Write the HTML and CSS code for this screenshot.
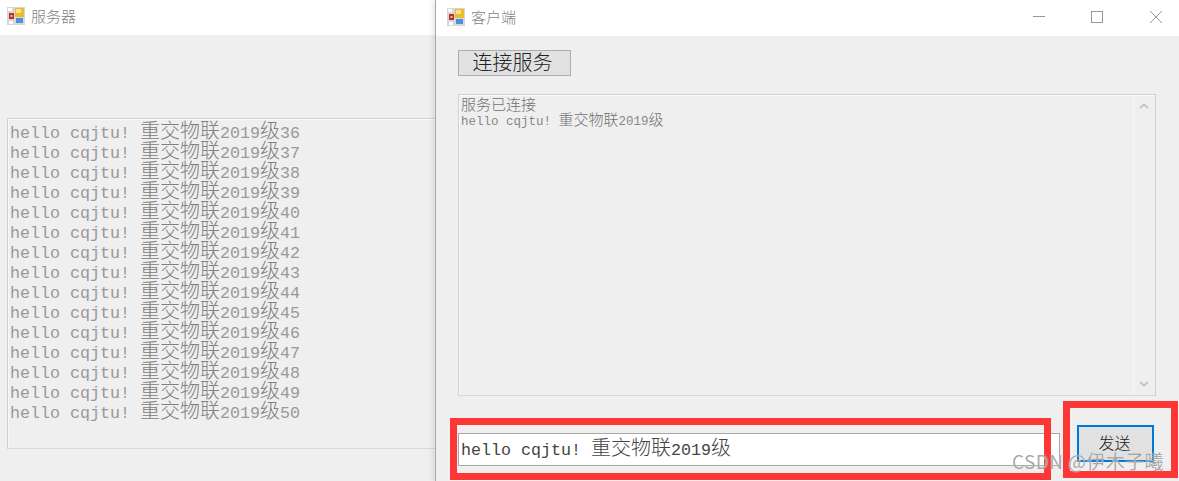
FILE: index.html
```html
<!DOCTYPE html>
<html>
<head>
    <title>客户端</title>
    <link rel="stylesheet" href="styles.css">
</head>
<body>
    <div class="window server">
        <div class="titlebar">
            <svg class="app-icon" viewBox="0 0 18 18"><rect width="18" height="18" fill="#d8d8d8"/><rect x="1" y="1" width="4" height="3" fill="#fff"/><rect x="2" y="6" width="5" height="6" fill="#b5322a"/><rect x="3.5" y="8" width="2" height="2" fill="#f2b8a8"/><rect x="8" y="1" width="9" height="9" fill="#efbb2c"/><rect x="9" y="2" width="5" height="4" fill="#f9e58c"/><rect x="9" y="11" width="7" height="5" fill="#4f8fe0"/><rect x="2" y="14" width="4" height="3" fill="#fff"/></svg>
            <span class="title">服务器</span>
        </div>
        <div class="server-body">
            <div class="log-box server-log">
                <div class="log-line">hello cqjtu! <span class="cjk">重交物联</span>2019<span class="cjk">级</span>36</div>
                <div class="log-line">hello cqjtu! <span class="cjk">重交物联</span>2019<span class="cjk">级</span>37</div>
                <div class="log-line">hello cqjtu! <span class="cjk">重交物联</span>2019<span class="cjk">级</span>38</div>
                <div class="log-line">hello cqjtu! <span class="cjk">重交物联</span>2019<span class="cjk">级</span>39</div>
                <div class="log-line">hello cqjtu! <span class="cjk">重交物联</span>2019<span class="cjk">级</span>40</div>
                <div class="log-line">hello cqjtu! <span class="cjk">重交物联</span>2019<span class="cjk">级</span>41</div>
                <div class="log-line">hello cqjtu! <span class="cjk">重交物联</span>2019<span class="cjk">级</span>42</div>
                <div class="log-line">hello cqjtu! <span class="cjk">重交物联</span>2019<span class="cjk">级</span>43</div>
                <div class="log-line">hello cqjtu! <span class="cjk">重交物联</span>2019<span class="cjk">级</span>44</div>
                <div class="log-line">hello cqjtu! <span class="cjk">重交物联</span>2019<span class="cjk">级</span>45</div>
                <div class="log-line">hello cqjtu! <span class="cjk">重交物联</span>2019<span class="cjk">级</span>46</div>
                <div class="log-line">hello cqjtu! <span class="cjk">重交物联</span>2019<span class="cjk">级</span>47</div>
                <div class="log-line">hello cqjtu! <span class="cjk">重交物联</span>2019<span class="cjk">级</span>48</div>
                <div class="log-line">hello cqjtu! <span class="cjk">重交物联</span>2019<span class="cjk">级</span>49</div>
                <div class="log-line">hello cqjtu! <span class="cjk">重交物联</span>2019<span class="cjk">级</span>50</div>
            </div>
        </div>
    </div>

    <div class="window client">
        <div class="titlebar">
            <svg class="app-icon" viewBox="0 0 18 18"><rect width="18" height="18" fill="#d8d8d8"/><rect x="1" y="1" width="4" height="3" fill="#fff"/><rect x="2" y="6" width="5" height="6" fill="#b5322a"/><rect x="3.5" y="8" width="2" height="2" fill="#f2b8a8"/><rect x="8" y="1" width="9" height="9" fill="#efbb2c"/><rect x="9" y="2" width="5" height="4" fill="#f9e58c"/><rect x="9" y="11" width="7" height="5" fill="#4f8fe0"/><rect x="2" y="14" width="4" height="3" fill="#fff"/></svg>
            <span class="title">客户端</span>
            <div class="win-controls">
                <svg viewBox="0 0 12 12"><path d="M0 5.5H12" stroke="#999" fill="none"/></svg>
                <svg class="win-max" viewBox="0 0 12 12"><rect x="0.5" y="0.5" width="11" height="11" stroke="#999" fill="none"/></svg>
                <svg viewBox="0 0 12 12"><path d="M0 0L12 12M12 0L0 12" stroke="#999" fill="none"/></svg>
            </div>
        </div>
        <div class="client-body">
            <button class="connect-btn">连接服务</button>
            <div class="log-box client-log">
                <div class="log-text">
                    <div class="log-status">服务已连接</div>
                    <div class="log-msg">hello cqjtu! <span class="cjk-small">重交物联</span>2019<span class="cjk-small">级</span></div>
                </div>
                <div class="scrollbar">
                    <svg viewBox="0 0 10 6"><path d="M1 5L5 1.5L9 5" stroke="#c4c4c4" stroke-width="2" fill="none"/></svg>
                    <svg viewBox="0 0 10 6"><path d="M1 1L5 4.5L9 1" stroke="#c4c4c4" stroke-width="2" fill="none"/></svg>
                </div>
            </div>
            <div class="send-row">
                <div class="msg-input">hello cqjtu! <span class="cjk">重交物联</span>2019<span class="cjk">级</span></div>
                <button class="send-btn">发送</button>
            </div>
        </div>
    </div>

    <div class="highlight highlight-input"></div>
    <div class="highlight highlight-send"></div>
    <div class="watermark">CSDN @伊木子曦</div>
</body>
</html>
```

FILE: styles.css
```css
html, body { margin: 0; padding: 0; }
body { position: relative; width: 1179px; height: 481px; overflow: hidden; background: #efefef; font-family: "Liberation Mono", "Noto Sans CJK SC", monospace; }

.window { position: absolute; top: 0; height: 481px; background: #efefef; display: flex; flex-direction: column; box-sizing: border-box; }
.server { left: 0; width: 436px; }
.client { left: 435px; width: 744px; border-left: 1px solid #a8a8a8; box-shadow: -3px 0 4px rgba(0, 0, 0, 0.08); }

.titlebar { background: #fff; display: flex; align-items: center; flex: none; box-sizing: border-box; font-family: "Noto Sans CJK SC", sans-serif; font-size: 15px; line-height: 18px; font-weight: 300; color: #7f7f7f; }
.server .titlebar { height: 35px; padding: 0 0 4px 7px; }
.client .titlebar { height: 36px; padding: 0 0 3px 11px; }
.app-icon { width: 18px; height: 18px; margin-right: 6px; flex: none; }
.win-controls { margin-left: auto; display: flex; gap: 46px; padding-right: 17px; }
.win-controls svg { width: 12px; height: 12px; display: block; }
.win-max { margin-right: 1px; }

.log-box { box-sizing: border-box; border: 1px solid #d0d0d0; border-bottom-color: #d8d8d8; box-shadow: inset 1px 1px 0 #f8f8f8; }

.server-body { padding: 83px 0 0 7px; }
.server-log { height: 331px; padding: 1px 0 0 2px; border-right: none; font-size: 16.67px; color: #999; }
.log-line { height: 20px; line-height: 20px; white-space: pre; }
.cjk { font-family: "Noto Sans CJK SC", sans-serif; font-size: 20px; font-weight: 300; line-height: 1; }
.server-log .cjk { color: #808080; }

.client-body { padding: 14px 0 0 22px; display: flex; flex-direction: column; }
.connect-btn { width: 113px; height: 26px; padding: 0 4px 2px 0; background: #e1e1e1; border: 1px solid #adadad; font-family: "Noto Sans CJK SC", sans-serif; font-size: 20px; line-height: 22px; font-weight: 300; color: #222; }

.client-log { width: 698px; height: 302px; margin-top: 18px; display: flex; justify-content: space-between; }
.log-text { padding: 1px 0 0 2px; color: #707070; }
.log-status { font-family: "Noto Sans CJK SC", sans-serif; font-size: 15px; line-height: 15px; font-weight: 300; }
.log-msg { font-size: 12.5px; line-height: 15px; color: #888; white-space: pre; }
.cjk-small { font-family: "Noto Sans CJK SC", sans-serif; font-size: 15px; font-weight: 300; line-height: 1; color: #707070; }
.scrollbar { width: 21px; margin-right: 1px; border-left: 1px solid #f6f6f6; display: flex; flex-direction: column; justify-content: space-between; align-items: center; padding: 8px 0; box-sizing: border-box; }
.scrollbar svg { width: 10px; height: 6px; }

.send-row { display: flex; margin-top: 29px; gap: 17px; align-items: flex-start; }
.msg-input { box-sizing: border-box; width: 602px; height: 33px; margin-top: 8px; padding: 3px 0 0 2px; background: #fff; border: 1px solid #a8a8a8; font-size: 16.67px; line-height: 22px; color: #444; white-space: pre; }
.send-btn { box-sizing: border-box; width: 77px; height: 37px; padding: 0 2px 4px 0; background: #e1e1e1; border: 2px solid #0078d7; font-family: "Noto Sans CJK SC", sans-serif; font-size: 16px; font-weight: 300; color: #222; }

.highlight { position: absolute; box-sizing: border-box; border: 7px solid #fd3636; }
.highlight-input { left: 450px; top: 418px; width: 601px; height: 62px; }
.highlight-send { left: 1063px; top: 401px; width: 115px; height: 77px; }

.watermark { position: absolute; left: 1012px; top: 450px; font-family: "Noto Sans CJK SC", sans-serif; font-size: 19px; line-height: 22px; letter-spacing: 0.4px; color: rgba(140, 140, 140, 0.75); text-shadow: 0 0 1px rgba(255, 255, 255, 0.9); white-space: nowrap; }
```
